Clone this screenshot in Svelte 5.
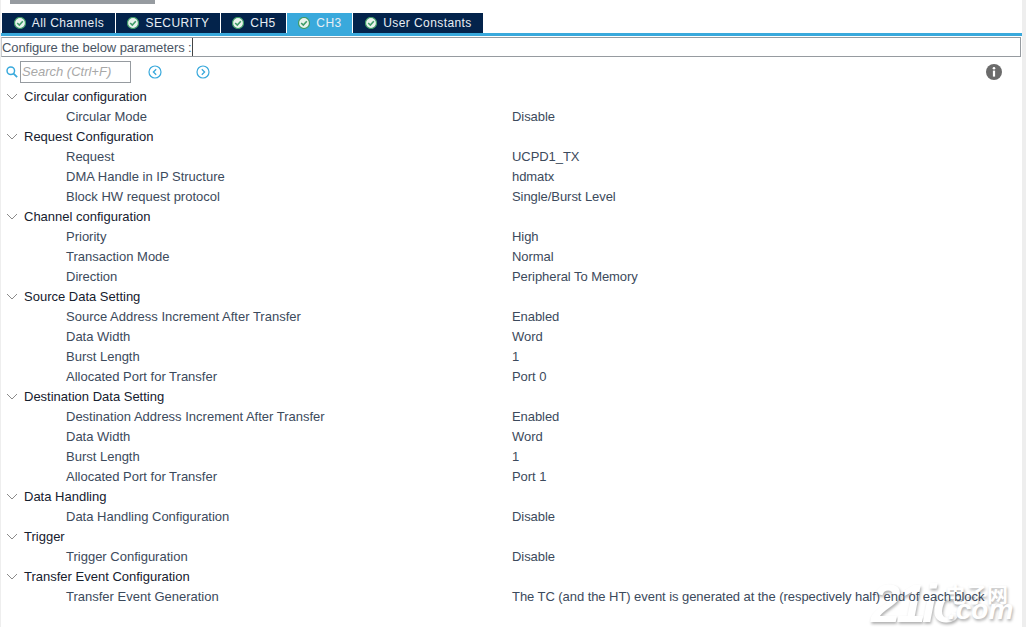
<script>
    const groups = [
        { title: 'Circular configuration', rows: [['Circular Mode', 'Disable']] },
        { title: 'Request Configuration', rows: [['Request', 'UCPD1_TX'], ['DMA Handle in IP Structure', 'hdmatx'], ['Block HW request protocol', 'Single/Burst Level']] },
        { title: 'Channel configuration', rows: [['Priority', 'High'], ['Transaction Mode', 'Normal'], ['Direction', 'Peripheral To Memory']] },
        { title: 'Source Data Setting', rows: [['Source Address Increment After Transfer', 'Enabled'], ['Data Width', 'Word'], ['Burst Length', '1'], ['Allocated Port for Transfer', 'Port 0']] },
        { title: 'Destination Data Setting', rows: [['Destination Address Increment After Transfer', 'Enabled'], ['Data Width', 'Word'], ['Burst Length', '1'], ['Allocated Port for Transfer', 'Port 1']] },
        { title: 'Data Handling', rows: [['Data Handling Configuration', 'Disable']] },
        { title: 'Trigger', rows: [['Trigger Configuration', 'Disable']] },
        { title: 'Transfer Event Configuration', rows: [['Transfer Event Generation', 'The TC (and the HT) event is generated at the (respectively half) end of each block']] }
    ];

    const tabs = [
        { name: 'All Channels', width: 113 },
        { name: 'SECURITY', width: 104 },
        { name: 'CH5', width: 65 },
        { name: 'CH3', width: 65, active: true },
        { name: 'User Constants', width: 130 }
    ];
</script>

<div class="page">
    <div class="top-strip"></div>

    <div class="tabs">
        {#each tabs as tab}
            <div class="tab" class:active={tab.active} style="width: {tab.width}px">
                <svg class="check" width="12" height="12" viewBox="0 0 12 12">
                    <circle cx="6" cy="6" r="5.5" fill="#e9f3ec" stroke="#3f9c68" stroke-width="1.2" />
                    <path d="M3.2 6 L5.3 8 L8.8 4.2" fill="none" stroke="#3f9c68" stroke-width="1.6" />
                </svg>
                <span>{tab.name}</span>
            </div>
        {/each}
    </div>
    <div class="tab-line"></div>

    <div class="configure">
        <span class="configure-label">Configure the below parameters :</span>
    </div>

    <div class="search-row">
        <svg class="search-icon" width="12" height="12" viewBox="0 0 14 14">
            <circle cx="5.6" cy="5.6" r="4.4" fill="none" stroke="#39a9dc" stroke-width="1.7" />
            <path d="M8.8 8.8 L13 13" stroke="#39a9dc" stroke-width="2" />
        </svg>
        <div class="search-box">Search (Ctrl+F)</div>
        <svg class="nav prev" width="14" height="14" viewBox="0 0 14 14">
            <circle cx="7" cy="7" r="6" fill="none" stroke="#39a9dc" stroke-width="1.2" />
            <path d="M8.2 4.2 L5.4 7 L8.2 9.8" fill="none" stroke="#39a9dc" stroke-width="1.3" />
        </svg>
        <svg class="nav next" width="14" height="14" viewBox="0 0 14 14">
            <circle cx="7" cy="7" r="6" fill="none" stroke="#39a9dc" stroke-width="1.2" />
            <path d="M5.8 4.2 L8.6 7 L5.8 9.8" fill="none" stroke="#39a9dc" stroke-width="1.3" />
        </svg>
        <svg class="info" width="16" height="16" viewBox="0 0 16 16">
            <circle cx="8" cy="8" r="8" fill="#6b6b6b" />
            <circle cx="8" cy="4.2" r="1.3" fill="#fff" />
            <rect x="6.9" y="6.6" width="2.2" height="6" fill="#fff" />
        </svg>
    </div>

    <div class="tree">
        {#each groups as group}
            <div class="group-row">
                <svg class="chevron" width="12" height="7" viewBox="0 0 12 7">
                    <path d="M1 1 L6 6 L11 1" fill="none" stroke="#8a8a8a" stroke-width="1" />
                </svg>
                <span>{group.title}</span>
            </div>
            {#each group.rows as row}
                <div class="param-row">
                    <span class="param-name">{row[0]}</span>
                    <span class="param-value">{row[1]}</span>
                </div>
            {/each}
        {/each}
    </div>

    <div class="watermark">
        <span class="wm-big">21ic</span>
        <span class="wm-side">
            <span class="wm-cn">电子网</span>
            <span class="wm-com">.com</span>
        </span>
    </div>
</div>

<style>
    :global(body) {
        margin: 0;
        background: #fff;
    }

    .page {
        position: relative;
        width: 1026px;
        height: 627px;
        overflow: hidden;
        box-sizing: border-box;
        border-left: 1px solid #eeeeee;
        border-right: 4px solid #eeeeee;
        font-family: "Liberation Sans", Arial, sans-serif;
        font-size: 13px;
        color: #3c4a5c;
    }

    .top-strip {
        width: 145px;
        height: 4px;
        margin-left: 9px;
        background: #969ba0;
    }

    .tabs {
        display: flex;
        margin-top: 9px;
        margin-left: 1px;
        height: 20px;
    }

    .tab {
        display: flex;
        align-items: center;
        justify-content: center;
        gap: 6px;
        box-sizing: border-box;
        padding-left: 1px;
        margin-right: 1px;
        background: #03234b;
        color: #e8eef4;
        font-size: 12px;
        letter-spacing: 0.42px;
    }

    .tab.active {
        background: #39a9dc;
    }

    .check {
        flex: none;
    }

    .tab-line {
        height: 3px;
        background: #39a9dc;
    }

    .configure {
        height: 20px;
        margin-top: 1px;
        margin-right: 1px;
        box-sizing: border-box;
        border: 1px solid #969ba0;
        border-left-color: #c9ccd0;
        display: flex;
        align-items: center;
    }

    .configure-label {
        height: 18px;
        line-height: 20px;
        border-right: 1px solid #444;
        letter-spacing: -0.08px;
        color: #4a5564;
    }

    .search-row {
        display: flex;
        align-items: center;
        height: 22px;
        margin-top: 4px;
    }

    .search-icon {
        margin-left: 5px;
        margin-right: 2px;
        flex: none;
    }

    .search-box {
        width: 111px;
        height: 22px;
        line-height: 20px;
        box-sizing: border-box;
        border: 1px solid #969ba0;
        padding-left: 1px;
        font-style: italic;
        color: #a8a8a8;
    }

    .nav {
        flex: none;
    }

    .prev {
        margin-left: 17px;
    }

    .next {
        margin-left: 34px;
    }

    .info {
        margin-left: auto;
        margin-right: 20px;
    }

    /* stacked above the watermark so the last row stays readable */
    .tree {
        position: relative;
        z-index: 1;
        margin-top: 3px;
    }

    .group-row,
    .param-row {
        display: flex;
        align-items: center;
        height: 20px;
        white-space: nowrap;
    }

    .group-row {
        color: #15202e;
    }

    .chevron {
        flex: none;
        margin-left: 5px;
        margin-right: 6px;
    }

    .param-name {
        width: 446px;
        flex: none;
        margin-left: 65px;
    }

    .param-value {
        letter-spacing: -0.06px;
    }

    /* site watermark stamped over the bottom right corner */
    .watermark {
        position: absolute;
        left: 870px;
        top: 583px;
        display: flex;
        color: #fff;
        font-weight: bold;
        font-style: italic;
        text-shadow: 1px 2px 3px #b0b0b0;
        pointer-events: none;
    }

    .wm-big {
        width: 74px;
        height: 42px;
        font-size: 53px;
        line-height: 42px;
        letter-spacing: -4px;
    }

    .wm-side {
        display: flex;
        flex-direction: column;
    }

    .wm-cn {
        font-family: "Noto Sans CJK SC", sans-serif;
        font-size: 21px;
        line-height: 20px;
        font-style: normal;
    }

    .wm-com {
        margin-left: 3px;
        font-size: 28px;
        line-height: 14px;
    }
</style>
